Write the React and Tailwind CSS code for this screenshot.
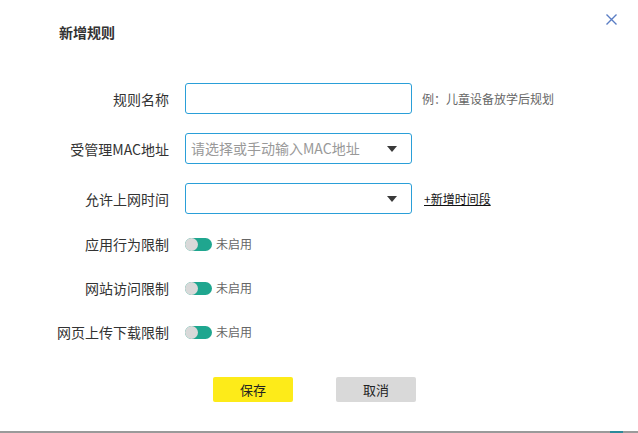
import React from 'react';

const font = { fontFamily: '"Noto Sans CJK SC", "Noto Sans", sans-serif' };

const Arrow = () => (
    <svg width="10" height="6" viewBox="0 0 10 6" className="shrink-0">
        <path d="M0 0 H10 L5 6 Z" fill="#3a3a3a" />
    </svg>
);

const Toggle = () => (
    <div className="flex items-center">
        <div className="relative w-[27px] h-[13px] rounded-full bg-[#1fa68f]">
            <div className="absolute left-0 top-0 w-[13px] h-[13px] rounded-full bg-[#d9d9d9]" />
        </div>
        <span className="ml-[4px] text-[12px] text-[#666]">未启用</span>
    </div>
);

const Row = ({ label, children, className = '' }) => (
    <div className={`flex items-center ${className}`}>
        <div className="w-[169px] text-right text-[14px] text-[#333] leading-5">{label}</div>
        <div className="ml-[16px] flex items-center">{children}</div>
    </div>
);

const boxClass = 'w-[227px] h-[31px] rounded-[3px] border border-[#2a9fd8]';

export default function App() {
    return (
        <div className="relative w-[638px] h-[433px] bg-white overflow-hidden" style={font}>
            <button className="absolute left-[606px] top-[14px]">
                <svg width="11" height="11" viewBox="0 0 11 11">
                    <path d="M0.5 0.5 L10.5 10.5 M10.5 0.5 L0.5 10.5" stroke="#5a7dc4" strokeWidth="1.4" />
                </svg>
            </button>

            <div className="pt-[22px] pl-[59px] text-[14px] font-bold text-[#333] leading-5">新增规则</div>

            <div className="mt-[41px]">
                <Row label="规则名称">
                    <div className={boxClass} />
                    <span className="ml-[10px] text-[12px] text-[#666]">例：儿童设备放学后规划</span>
                </Row>
                <Row label="受管理MAC地址" className="mt-[19px]">
                    <div className={`${boxClass} flex items-center justify-between pl-[5px] pr-[14px]`}>
                        <span className="text-[14px] text-[#999]">请选择或手动输入MAC地址</span>
                        <Arrow />
                    </div>
                </Row>
                <Row label="允许上网时间" className="mt-[19px]">
                    <div className={`${boxClass} flex items-center justify-end pr-[14px]`}>
                        <Arrow />
                    </div>
                    <span className="ml-[12px] text-[12px] text-[#111] underline">+新增时间段</span>
                </Row>
                <Row label="应用行为限制" className="mt-[20px]">
                    <Toggle />
                </Row>
                <Row label="网站访问限制" className="mt-[24px]">
                    <Toggle />
                </Row>
                <Row label="网页上传下载限制" className="mt-[24px]">
                    <Toggle />
                </Row>
            </div>

            <div className="mt-[35px] flex pl-[213px] gap-[43px]">
                <button className="w-[80px] h-[25px] rounded-[2px] bg-[#fdeb19] text-[13px] text-[#222]">保存</button>
                <button className="w-[80px] h-[25px] rounded-[2px] bg-[#d9d9d9] text-[13px] text-[#222]">取消</button>
            </div>

            <div className="absolute left-0 bottom-0 w-full h-[2px] bg-[#9a9a9a]">
                <div className="absolute left-[610px] top-0 w-[13px] h-[2px] bg-[#2b8a9a]" />
            </div>
        </div>
    );
}
